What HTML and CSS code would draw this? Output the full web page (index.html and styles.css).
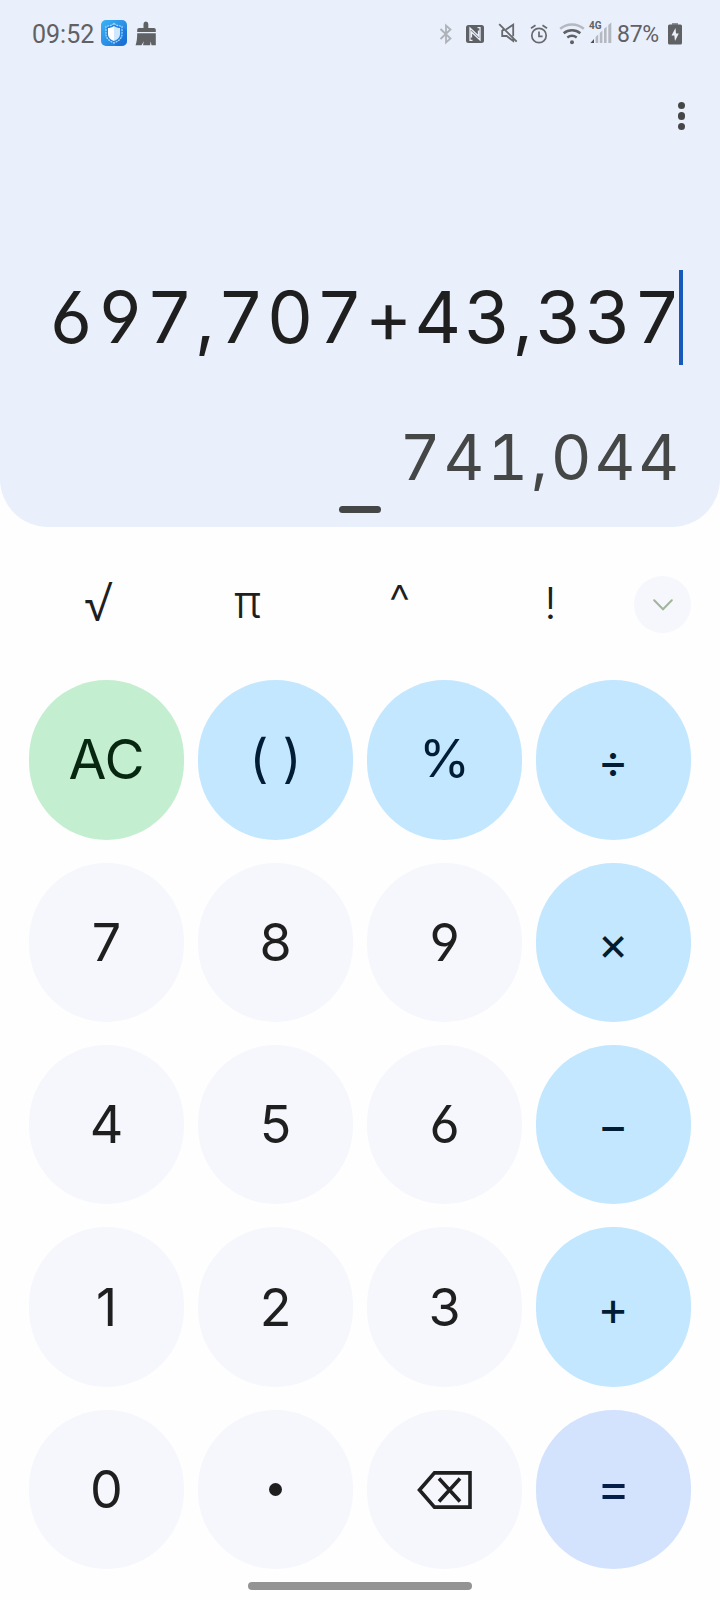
FILE: index.html
```html
<!DOCTYPE html>
<html lang="en">
<head>
  <meta charset="UTF-8">
  <meta name="viewport" content="width=device-width, initial-scale=1.0">
  <title>Calculator</title>
  <link rel="stylesheet" href="styles.css">
</head>
<body>
  <div class="display">
    <div class="status">
      <span class="clock">09:52</span>
      <svg class="shield" width="26" height="26" viewBox="0 0 26 26">
        <defs>
          <linearGradient id="blue" x1="0" y1="0" x2="1" y2="1">
            <stop offset="0" stop-color="#3bb3f4"/>
            <stop offset="1" stop-color="#1c71db"/>
          </linearGradient>
        </defs>
        <rect width="26" height="26" rx="5" fill="url(#blue)"/>
        <path d="M22 7l4 4v12l-3 3h-8l-3-5z" fill="#1766cc" opacity=".4"/>
        <path d="M13 3.500l2 1.500 6 1.500v8c0 4-4 7-8 8.500-4-1.500-8-4.500-8-8.500v-8L11 5z" fill="#2483e0" stroke="#a5dcfb" stroke-width="1.200" stroke-dasharray="2 .8"/>
        <path d="M13 6c2 1.500 4 2 6 2v6c0 3.500-3 6-6 7z" fill="#cfe8fc"/>
        <path d="M13 6c-2 1.500-4 2-6 2v6c0 3.500 3 6 6 7z" fill="#fff"/>
      </svg>
      <svg class="brush" width="22" height="26" viewBox="0 0 22 26" fill="#5f6164">
        <path d="M8.500 12V4q0-2.500 2.400-2.500T13.300 4v4H19q1.800 0 1.800 1.800V12H2.200V9.800Q2.200 8 4 8h4.500z"/>
        <path d="M2.200 13.200h18.600V25.200H16.500l-.8-4-.6 4H8l.8-4-2.300 4H.6c1.200-3.500 1.600-7 1.600-12z"/>
      </svg>

      <div class="status-right">
        <svg class="bt" width="14" height="22" viewBox="0 0 14 22" fill="none" stroke="#aeb2b9" stroke-width="1.800">
          <path d="M1.500 6l10 9.500L7 19.500V2.500l4.500 4-10 9.500"/>
        </svg>
        <svg class="nfc" width="18" height="18" viewBox="0 0 18 18">
          <rect width="18" height="18" rx="2.500" fill="#5f6164"/>
          <path d="M6.500 15.300H4V3l8.500 8V5.500M11.500 2.700H14V15L5.500 7v5.500" fill="none" stroke="#e9effb" stroke-width="1.300"/>
        </svg>
        <svg class="mute" width="20" height="20" viewBox="0 0 20 20" fill="none" stroke="#66696d" stroke-width="1.800">
          <path d="M1.200 1.200l17.500 17.500M8 6.500l7.200-4.800v11.500M4.200 7v6h4.500l6.500 5v-3M4.200 7h2"/>
        </svg>
        <svg class="alarm" width="18" height="20" viewBox="0 0 18 20" fill="none" stroke="#66696d" stroke-width="1.700">
          <circle cx="9" cy="11.500" r="7.200"/>
          <path d="M9 7.500v4.800h3.600M1 4.200l4.500-3M12.500 1.200l4.500 3"/>
        </svg>
        <svg class="wifi" width="26" height="23" viewBox="0 0 26 23" fill="none" stroke-width="2.500">
          <path d="M1.200 6.800a18 18 0 0 1 23.600 0" stroke="#b4b8c0"/>
          <path d="M4.700 11.200a13 13 0 0 1 16.600 0M8.300 15.500a8 8 0 0 1 9.400 0" stroke="#5f6164"/>
          <circle cx="13" cy="20.300" r="2" fill="#5f6164"/>
        </svg>
        <div class="signal">
          <span class="net">4G</span>
          <svg width="22" height="22" viewBox="0 0 22 22" fill="#b4b8c0">
            <path d="M.5 21l3.500-4v4z" fill="#4b4d50"/>
            <path d="M5.600 21v-6l2.600-2.400V21zM9.800 21V11l2.600-2.400V21zM14 21V7l2.600-2.400V21zM18.300 21V3l3-2.500V21z"/>
          </svg>
        </div>
        <span class="percent">87%</span>
        <svg class="battery" width="14" height="23" viewBox="0 0 14 23">
          <rect x="4" y="1" width="6" height="2" fill="#8c8f94"/>
          <rect y="2.500" width="14" height="20" rx="1.500" fill="#5f6164"/>
          <path d="M7.500 6L3.500 13.500h2.800L7 19l3.800-7.500H8z" fill="#e9effb"/>
        </svg>
      </div>
    </div>

    <div class="menu"><i></i><i></i><i></i></div>
    <div class="formula">697,707+43,337<span class="cursor"></span></div>
    <div class="result">741,044</div>
    <div class="handle"></div>
  </div>

  <div class="functions">
    <button class="fn root">√</button>
    <button class="fn pi">π</button>
    <button class="fn power">^</button>
    <button class="fn fact">!</button>
    <button class="expand">
      <svg width="20" height="12" viewBox="0 0 20 12" fill="none" stroke="#a3b59d" stroke-width="2" stroke-linecap="round">
        <path d="M1.200 1.200l8.800 9 8.800-9"/>
      </svg>
    </button>
  </div>

  <div class="keypad">
    <button class="key clear">AC</button>
    <button class="key op parens"><span>(</span><span>)</span></button>
    <button class="key op pct">%</button>
    <button class="key op sign">÷</button>
    <button class="key">7</button>
    <button class="key">8</button>
    <button class="key">9</button>
    <button class="key op sign">×</button>
    <button class="key">4</button>
    <button class="key">5</button>
    <button class="key">6</button>
    <button class="key op sign">−</button>
    <button class="key">1</button>
    <button class="key">2</button>
    <button class="key">3</button>
    <button class="key op sign">+</button>
    <button class="key">0</button>
    <button class="key"><span class="point"></span></button>
    <button class="key">
      <svg class="delete" width="55" height="38" viewBox="0 0 55 38" fill="none" stroke="#1f1f1f" stroke-width="3.600">
        <path d="M2.500 19L17.500 1.900H53v34.200H17.500zM22 7.500l21 23M43 7.500l-21 23"/>
      </svg>
    </button>
    <button class="key equals">=</button>
  </div>

  <div class="navbar"></div>
</body>
</html>
```
FILE: styles.css
```css
:root {
  --panel: #e9effb;
  --key: #f5f7fc;
  --op: #c3e7ff;
  --text: #1f1f1f;
  --muted: #444746;
  --status: #5f6164;
}

* { box-sizing: border-box; }

body {
  margin: 0;
  width: 720px;
  height: 1600px;
  overflow: hidden;
  background-color: #fefefe;
  color: var(--text);
  font-family: Inter, sans-serif;
  font-feature-settings: "cv03", "cv04";
  display: flex;
  flex-direction: column;
}

button {
  border: none;
  padding: 0;
  background: none;
  color: inherit;
  font-family: inherit;
  font-feature-settings: inherit;
  display: flex;
  align-items: center;
  justify-content: center;
}

svg { display: block; flex: none; }

.display {
  height: 527px;
  flex: none;
  background-color: var(--panel);
  border-radius: 0 0 48px 48px;
  display: flex;
  flex-direction: column;
}

.status {
  height: 68px;
  padding: 0 38px 0 32px;
  display: flex;
  align-items: center;
  font-family: Roboto, sans-serif;
  color: var(--status);
}

.clock { font-size: 25px; width: 69px; }
.shield { margin-top: -2px; }
.brush { margin-left: 8px; margin-top: -3px; }

.status-right {
  margin-left: auto;
  display: flex;
  align-items: center;
}

.nfc { margin-left: 13px; }
.mute { margin-left: 14px; margin-top: -2px; }
.alarm { margin-left: 12px; }
.wifi { margin-left: 11px; margin-top: -2px; }

.signal {
  position: relative;
  margin-left: 5px;
  margin-top: -2px;
}

.net {
  position: absolute;
  left: -1px;
  top: -1px;
  font-size: 10px;
  font-weight: 700;
  line-height: 9px;
}

.percent {
  width: 51px;
  margin-left: 5px;
  font-size: 23px;
  letter-spacing: -0.3px;
}

.battery { margin-top: -2px; }

.menu {
  align-self: flex-end;
  margin: 33.500px 35px 0 0;
  display: flex;
  flex-direction: column;
  gap: 3px;
}

.menu i {
  width: 7.500px;
  height: 7.500px;
  border-radius: 50%;
  background-color: var(--muted);
}

.formula {
  height: 95px;
  margin-top: 140px;
  padding-right: 37px;
  display: flex;
  justify-content: flex-end;
  line-height: 93px;
  font-size: 72px;
  letter-spacing: 2.600px;
  font-feature-settings: "tnum", "cv03", "cv04";
}

.cursor {
  width: 4px;
  height: 95px;
  margin-left: -4px;
  background-color: #185abc;
}

.result {
  margin-top: 52px;
  padding-right: 38px;
  line-height: 80px;
  text-align: right;
  font-size: 63px;
  letter-spacing: 2.900px;
  font-feature-settings: "tnum", "cv03", "cv04";
  color: var(--muted);
}

.handle {
  width: 42px;
  height: 7px;
  margin: 9px auto 0;
  border-radius: 4px;
  background-color: var(--muted);
}

.functions {
  display: grid;
  grid-template-columns: repeat(4, 151px) 57px;
  height: 57px;
  margin: 49px 0 0 22px;
  flex: none;
}

.fn { font-size: 44px; line-height: 50px; }
.root { font-family: "Open Sans", sans-serif; font-size: 47px; padding-bottom: 6px; }
.pi { font-size: 46px; font-weight: 350; padding: 0 2px 9px 0; }
.power { font-size: 48px; font-weight: 350; padding-bottom: 8px; }
.fact { padding-bottom: 5px; font-weight: 350; }

.expand {
  width: 57px;
  height: 57px;
  margin-left: 8px;
  border-radius: 50%;
  background-color: var(--key);
}

.keypad {
  display: grid;
  grid-template-columns: repeat(4, 155px);
  grid-template-rows: 160px 159px 159px 160px 159px;
  gap: 23px 14px;
  margin: 47px 0 0 29px;
}

.key {
  border-radius: 80px;
  background-color: var(--key);
  font-size: 52px;
}

.op { background-color: var(--op); color: #001d35; }

.clear {
  background-color: #c4eed0;
  color: #072711;
  font-size: 55px;
  padding-bottom: 2px;
}

.parens { gap: 14px; padding-bottom: 4px; }
.pct { padding-bottom: 3px; }
.sign { font-size: 47px; padding-right: 1px; }
.equals {
  background-color: #d3e3fd;
  color: #041e49;
  font-size: 50px;
  padding-bottom: 3px;
}

.point {
  width: 13px;
  height: 13px;
  border-radius: 50%;
  background-color: var(--text);
}

.navbar {
  width: 224px;
  height: 8px;
  margin: 13px auto 0;
  border-radius: 4px;
  background-color: #939393;
}
```
